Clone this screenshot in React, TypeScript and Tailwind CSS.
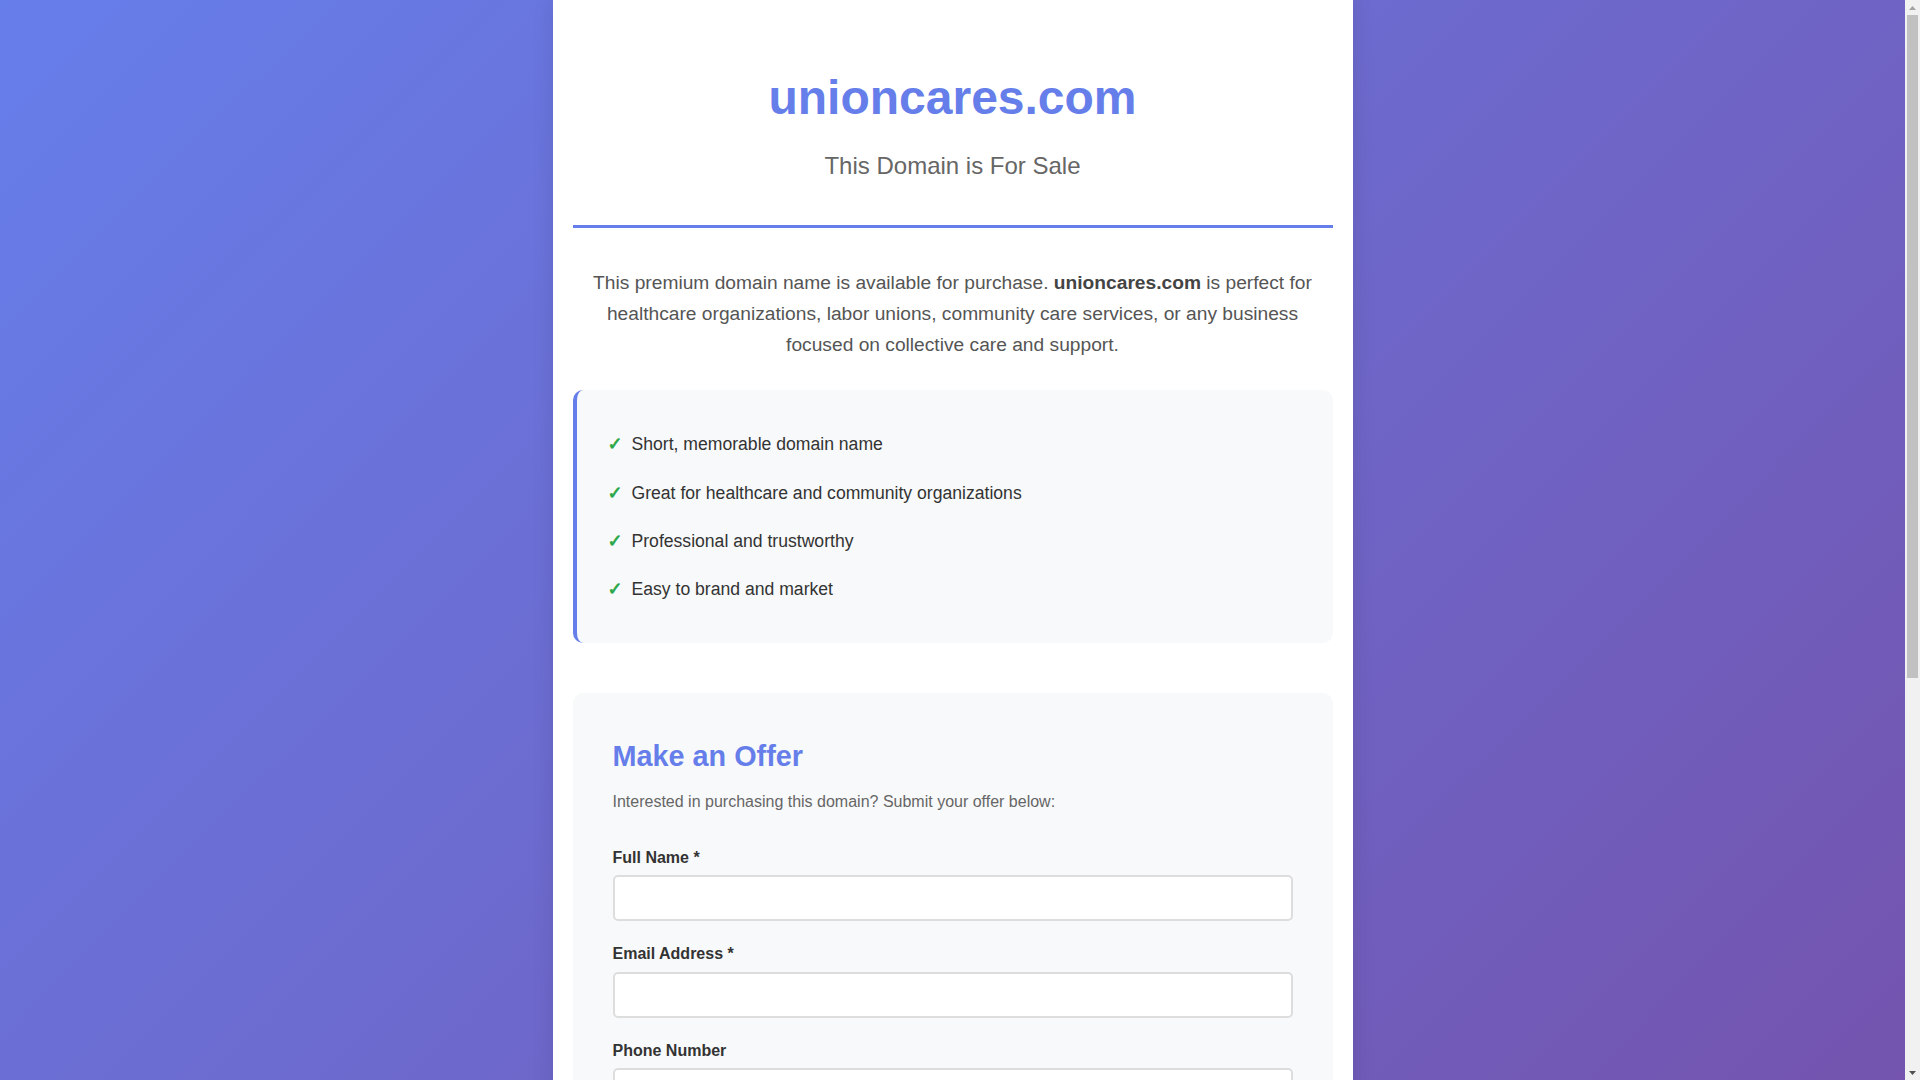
import React from "react";

const features = [
  "Short, memorable domain name",
  "Great for healthcare and community organizations",
  "Professional and trustworthy",
  "Easy to brand and market",
];

function Field({
  label,
  required,
  children,
}: {
  label: string;
  required?: boolean;
  children: React.ReactNode;
}) {
  return (
    <div className="mb-[20px]">
      <label className="block mb-[5px] font-bold text-[16px] leading-[1.6] text-[#333]">
        {label}
        {required ? " *" : ""}
      </label>
      {children}
    </div>
  );
}

const inputCls =
  "block w-full h-[46px] px-[12px] bg-white border-2 border-[#ddd] rounded-[5px] text-[16px] text-[#333] outline-none font-['Liberation_Sans',Arial,sans-serif]";

function FakeScrollbar() {
  return (
    <div className="fixed top-0 right-0 w-[15px] h-screen bg-[#f1f1f1] flex flex-col items-center">
      <div className="h-[15px] w-full flex items-center justify-center">
        <svg width="7" height="4" viewBox="0 0 7 4">
          <path d="M0 4 L3.5 0 L7 4 Z" fill="#a3a3a3" />
        </svg>
      </div>
      <div className="w-[11px] h-[663px] bg-[#c1c1c1]" />
      <div className="flex-1" />
      <div className="h-[15px] w-full flex items-center justify-center">
        <svg width="7" height="4" viewBox="0 0 7 4">
          <path d="M0 0 L7 0 L3.5 4 Z" fill="#505050" />
        </svg>
      </div>
    </div>
  );
}

export default function App() {
  return (
    <div className="min-h-screen pr-[15px] bg-[linear-gradient(135deg,#667eea_0%,#764ba2_100%)] font-['Liberation_Sans',Arial,sans-serif] leading-[1.6] text-[#333]">
      <div className="max-w-[800px] mx-auto bg-white px-[20px] pb-[56px] shadow-[0_0_20px_rgba(0,0,0,0.1)]">
        <header className="pt-[60px] pb-[40px] border-b-[3px] border-[#667eea] text-center">
          <h1 className="text-[48px] font-bold leading-[1.6] text-[#667eea] mb-[10px]">
            unioncares.com
          </h1>
          <p className="text-[24px] leading-[1.6] text-[#666]">This Domain is For Sale</p>
        </header>

        <p className="mt-[40px] px-[10px] text-center text-[19.2px] leading-[1.6] text-[#555]">
          This premium domain name is available for purchase.{" "}
          <strong className="font-bold text-[#444]">unioncares.com</strong> is perfect for
          healthcare organizations, labor unions, community care services, or any business
          focused on collective care and support.
        </p>

        <div className="mt-[30px] bg-[#f8f9fa] border-l-4 border-[#667eea] rounded-[10px] py-[30px] pl-[30px] pr-[30px]">
          <ul>
            {features.map((f) => (
              <li key={f} className="py-[10px] h-[48.16px] text-[17.6px] leading-[1.6] text-[#333] flex items-center">
                <span className="inline-block w-[25px] pl-[1px] leading-[1] font-bold text-[#28a745] font-['DejaVu_Sans',sans-serif] text-[18px] [-webkit-text-stroke:0.7px_#28a745]">
                  ✓
                </span>
                <span>{f}</span>
              </li>
            ))}
          </ul>
        </div>

        <div className="mt-[50px] bg-[#f8f9fa] rounded-[10px] px-[40px] pt-[40px] pb-[40px]">
          <h2 className="text-[28.8px] font-bold leading-[1.6] text-[#667eea] mb-[10px]">
            Make an Offer
          </h2>
          <p className="text-[16px] leading-[1.6] text-[#666] mb-[30px]">
            Interested in purchasing this domain? Submit your offer below:
          </p>
          <form onSubmit={(e) => e.preventDefault()}>
            <Field label="Full Name" required>
              <input type="text" className={inputCls} />
            </Field>
            <Field label="Email Address" required>
              <input type="email" className={inputCls} />
            </Field>
            <Field label="Phone Number">
              <input type="tel" className={inputCls} />
            </Field>
            <Field label="Your Offer (USD)" required>
              <input type="number" className={inputCls} />
            </Field>
            <Field label="Message">
              <textarea className="block w-full h-[120px] p-[12px] bg-white border-2 border-[#ddd] rounded-[5px] text-[16px] outline-none resize-y font-['Liberation_Sans',Arial,sans-serif]" />
            </Field>
            <button
              type="submit"
              className="w-full h-[57px] rounded-[5px] bg-[linear-gradient(135deg,#667eea_0%,#764ba2_100%)] text-white text-[18px] font-bold"
            >
              Submit Offer
            </button>
          </form>
        </div>

        <footer className="mt-[50px] pt-[30px] border-t border-[#eee] text-center text-[14px] leading-[1.6] text-[#999]">
          <p>© 2025 unioncares.com. All rights reserved.</p>
          <p>Serious offers only. We will respond within 24-48 hours.</p>
        </footer>
      </div>
      <FakeScrollbar />
    </div>
  );
}
